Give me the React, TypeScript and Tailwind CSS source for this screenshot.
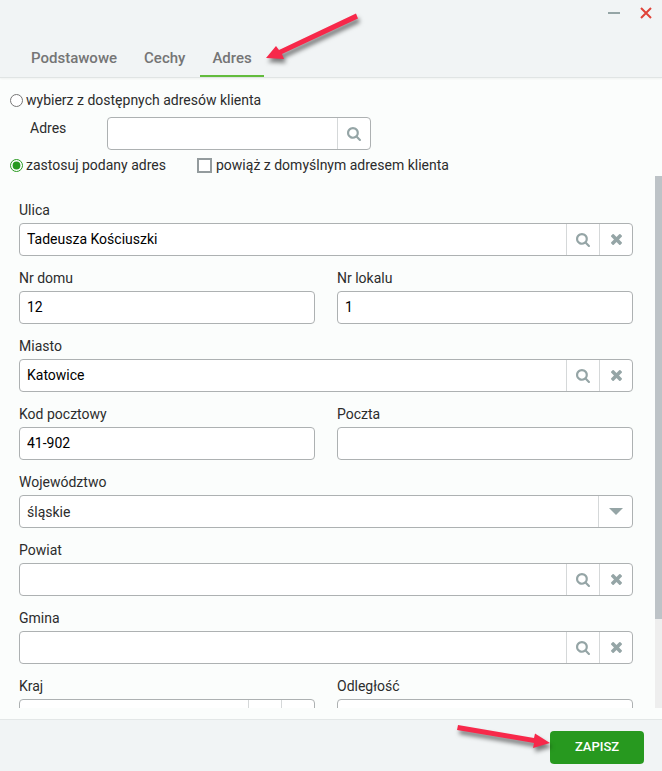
import { useState } from 'react';
import type { ReactNode, UIEvent } from 'react';

type Tab = 'Podstawowe' | 'Cechy' | 'Adres';

const TABS: Tab[] = ['Podstawowe', 'Cechy', 'Adres'];

function SearchIcon() {
  return (
    <svg viewBox="0 128 1664 1664" className="size-[14px] fill-[#95a5a6]" aria-hidden="true">
      <path d="M1152 832q0-185-131.5-316.5T704 384 387.5 515.5 256 832t131.5 316.5T704 1280t316.5-131.5T1152 832zm512 832q0 52-38 90t-90 38q-54 0-90-38l-343-342q-179 124-399 124-143 0-273.5-55.5t-225-150-150-225T0 832t55.5-273.5 150-225 225-150T704 128t273.5 55.5 225 150 150 225T1408 832q0 220-124 399l343 343q37 37 37 90z" />
    </svg>
  );
}

function ClearIcon() {
  return (
    <svg viewBox="302 366 1188 1188" className="size-[11px] fill-[#95a5a6]" aria-hidden="true">
      <path d="M1490 1322q0 40-28 68l-136 136q-28 28-68 28t-68-28l-294-294-294 294q-28 28-68 28t-68-28l-136-136q-28-28-28-68t28-68l294-294-294-294q-28-28-28-68t28-68l136-136q28-28 68-28t68 28l294 294 294-294q28-28 68-28t68 28l136 136q28 28 28 68t-28 68l-294 294 294 294q28 28 28 68z" />
    </svg>
  );
}

function AddonButton({ label, onClick, children }: { label: string; onClick?: () => void; children: ReactNode }) {
  return (
    <button
      type="button"
      aria-label={label}
      onClick={onClick}
      className="flex w-[33px] shrink-0 items-center justify-center border-l border-[#d5d8d9] hover:bg-gray-50"
    >
      {children}
    </button>
  );
}

interface FieldProps {
  id: string;
  label: string;
  initial?: string;
  lookup?: boolean;
  wide?: boolean;
}

function Field({ id, label, initial = '', lookup = false, wide = false }: FieldProps) {
  const [value, setValue] = useState(initial);

  return (
    <div className={wide ? 'col-span-2' : ''}>
      <label htmlFor={id} className="mb-[3px] block leading-5">{label}</label>
      <div className="flex h-[33px] overflow-hidden rounded border border-[#adb1b2] bg-white">
        <input
          id={id}
          type="text"
          value={value}
          onChange={(e) => setValue(e.target.value)}
          className="min-w-0 flex-1 px-[7px] pb-px text-black outline-none"
        />
        {lookup && (
          <>
            <AddonButton label={`Szukaj: ${label}`}><SearchIcon /></AddonButton>
            <AddonButton label={`Wyczyść: ${label}`} onClick={() => setValue('')}><ClearIcon /></AddonButton>
          </>
        )}
      </div>
    </div>
  );
}

export default function App() {
  const [tab, setTab] = useState<Tab>('Adres');
  const [source, setSource] = useState<'existing' | 'custom'>('custom');
  const [linked, setLinked] = useState(false);
  const [scrolled, setScrolled] = useState(0);

  const handleScroll = (e: UIEvent<HTMLDivElement>) => {
    const el = e.currentTarget;
    setScrolled(el.scrollTop / Math.max(1, el.scrollHeight - el.clientHeight));
  };

  return (
    <div className="flex h-screen flex-col bg-[#fbfdfc] font-['Roboto',sans-serif] text-sm text-[#2c2c2c]">
      {/* Title bar */}
      <header className="border-b border-[#e0e4e4] bg-[#f1f4f5] shadow-xs">
        <div className="flex h-[43px] items-start justify-end gap-4 pt-1 pr-2">
          <button type="button" aria-label="Minimalizuj" className="flex h-[18px] w-4 items-center justify-center">
            <svg viewBox="0 0 12 2" className="h-0.5 w-3"><path d="M0 1h12" stroke="#95a5a6" strokeWidth="2" /></svg>
          </button>
          <button type="button" aria-label="Zamknij" className="flex h-[18px] w-4 items-center justify-center">
            <svg viewBox="0 0 12 12" className="size-3"><path d="M1 1l10 10M11 1L1 11" stroke="#e04339" strokeWidth="2" /></svg>
          </button>
        </div>
        <nav className="flex gap-[3px] pl-[19px]">
          {TABS.map((t) => (
            <div key={t} className="relative">
              <button
                type="button"
                onClick={() => setTab(t)}
                className={`h-[34px] border-b-2 px-3 text-[15px] font-medium text-[#757575] ${
                  tab === t ? 'border-[#62bb3c]' : 'border-transparent'
                }`}
              >
                {t}
              </button>
              {t === 'Adres' && (
                <svg
                  viewBox="0 0 100 56"
                  className="pointer-events-none absolute bottom-[10px] left-full h-14 w-[100px] drop-shadow-[2px_4px_2px_rgba(0,0,0,0.5)]"
                  aria-hidden="true"
                >
                  <path d="M92 2.500L94 7.500L18 43L20 48L2 47L12 35L15 39Z" fill="#f7284a" />
                </svg>
              )}
            </div>
          ))}
        </nav>
      </header>

      {/* Address source */}
      <div className="pt-3 pl-[10px]">
        <div className="flex h-5 items-center gap-[3px]">
          <input
            id="src-existing"
            type="radio"
            name="source"
            checked={source === 'existing'}
            onChange={() => setSource('existing')}
            className="size-[13px] accent-[#27991f]"
          />
          <label htmlFor="src-existing">wybierz z dostępnych adresów klienta</label>
        </div>
        <div className="mt-[7px] flex pl-5">
          <label htmlFor="client-address" className="w-[77px] leading-[22px]">Adres</label>
          <div className="flex h-[33px] w-[264px] overflow-hidden rounded border border-[#adb1b2] bg-white">
            <input id="client-address" type="text" className="min-w-0 flex-1 px-[7px] outline-none" />
            <AddonButton label="Szukaj adresu"><SearchIcon /></AddonButton>
          </div>
        </div>
        <div className="mt-1 flex h-[22px] items-center">
          <div className="flex w-[187px] items-center gap-[3px]">
            <input
              id="src-custom"
              type="radio"
              name="source"
              checked={source === 'custom'}
              onChange={() => setSource('custom')}
              className="size-[13px] accent-[#27991f]"
            />
            <label htmlFor="src-custom">zastosuj podany adres</label>
          </div>
          <div className="flex items-center gap-1">
            <input
              id="linked"
              type="checkbox"
              checked={linked}
              onChange={(e) => setLinked(e.target.checked)}
              className="size-[15px] appearance-none border-2 border-[#939b9d] bg-white checked:bg-[#27991f]"
            />
            <label htmlFor="linked">powiąż z domyślnym adresem klienta</label>
          </div>
        </div>
      </div>

      {/* Form with its scroll bar */}
      <div className="mb-[11px] flex min-h-0 flex-1">
        <div
          onScroll={handleScroll}
          className="flex-1 overflow-y-auto pt-6 pr-[22px] pb-14 pl-[19px] [scrollbar-width:none]"
        >
          <form className="grid grid-cols-2 gap-x-[22px] gap-y-3">
            <Field id="street" label="Ulica" initial="Tadeusza Kościuszki" lookup wide />
            <Field id="house" label="Nr domu" initial="12" />
            <Field id="flat" label="Nr lokalu" initial="1" />
            <Field id="city" label="Miasto" initial="Katowice" lookup wide />
            <Field id="postcode" label="Kod pocztowy" initial="41-902" />
            <Field id="post" label="Poczta" />
            <div className="col-span-2">
              <label htmlFor="region" className="mb-[3px] block leading-5">Województwo</label>
              <div className="relative h-[33px] rounded border border-[#adb1b2] bg-white">
                <select id="region" defaultValue="śląskie" className="size-full appearance-none px-[7px] outline-none">
                  <option>śląskie</option>
                  <option>małopolskie</option>
                  <option>opolskie</option>
                </select>
                <span className="pointer-events-none absolute inset-y-0 right-0 flex w-[34px] items-center justify-center border-l border-[#d5d8d9]">
                  <svg viewBox="0 0 14 7" className="h-[7px] w-3.5 fill-[#95a5a6]"><path d="M0 0h14L7 7z" /></svg>
                </span>
              </div>
            </div>
            <Field id="county" label="Powiat" lookup wide />
            <Field id="commune" label="Gmina" lookup wide />
            <Field id="country" label="Kraj" lookup />
            <Field id="distance" label="Odległość" />
          </form>
        </div>
        <div className="w-[7px] bg-[#eeeeee]">
          <div className="h-5/6 bg-[#bdc3c7]" style={{ transform: `translateY(${scrolled * 20}%)` }} />
        </div>
      </div>

      <footer className="flex justify-end border-t border-[#e3e7e7] bg-[#f1f4f5] pt-[11px] pr-[18px] pb-[7px]">
        <div className="relative">
          <svg
            viewBox="0 0 100 32"
            className="pointer-events-none absolute right-full bottom-2 h-8 w-[100px] drop-shadow-[2px_4px_2px_rgba(0,0,0,0.5)]"
            aria-hidden="true"
          >
            <path d="M8 1L84 14L85 9.500L100 19L83 24L84 19L7 6Z" fill="#f7284a" />
          </svg>
          <button type="button" className="h-[33px] w-[94px] rounded bg-[#27991f] text-[13px] font-medium text-white hover:bg-[#218519]">
            ZAPISZ
          </button>
        </div>
      </footer>
    </div>
  );
}
